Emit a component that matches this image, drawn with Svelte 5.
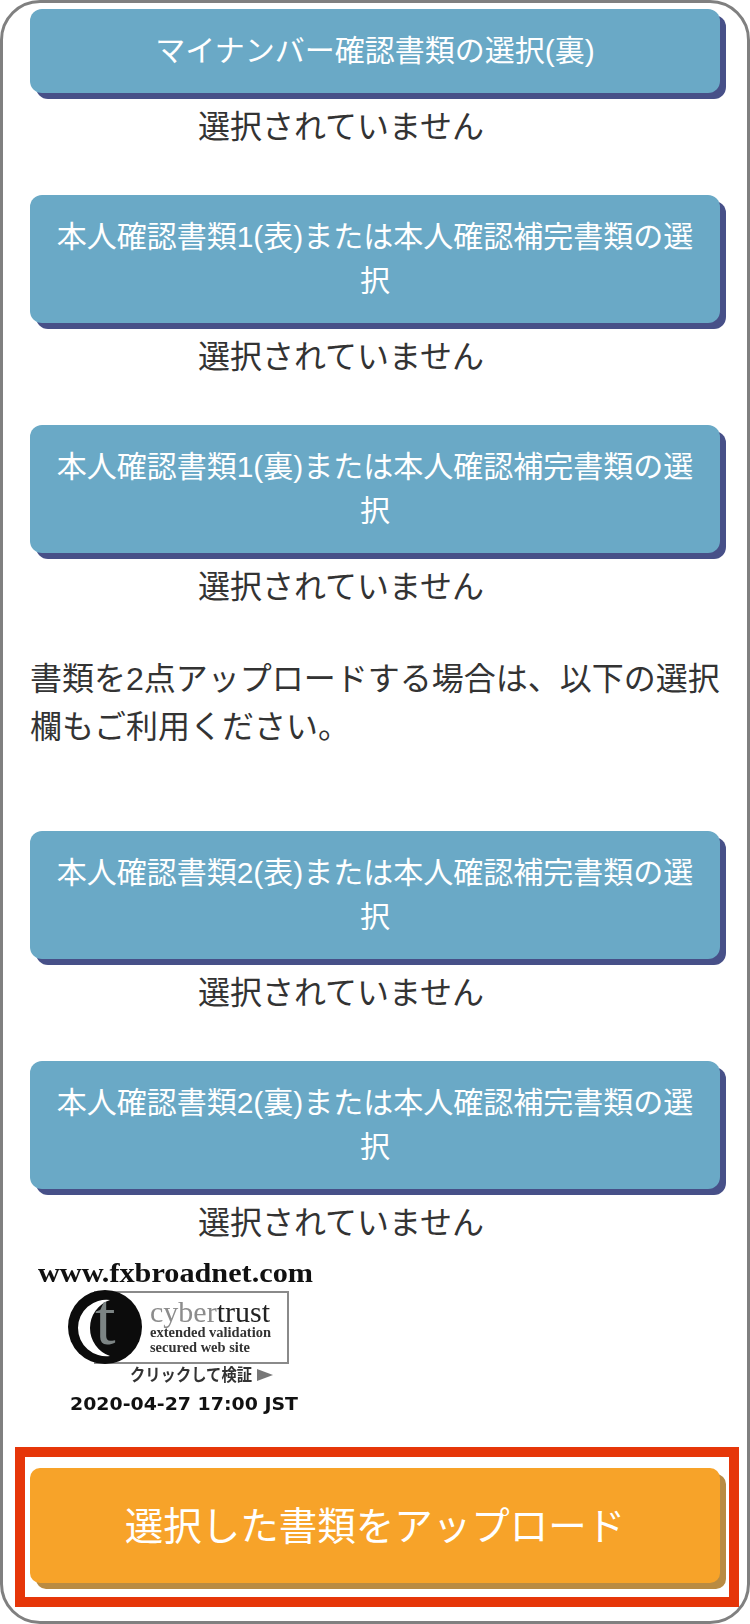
<script>
  const before = [
    { label: "マイナンバー確認書類の選択(裏)" },
    { label: "本人確認書類1(表)または本人確認補完書類の選択" },
    { label: "本人確認書類1(裏)または本人確認補完書類の選択" }
  ];
  const after = [
    { label: "本人確認書類2(表)または本人確認補完書類の選択" },
    { label: "本人確認書類2(裏)または本人確認補完書類の選択" }
  ];
</script>

<main class="frame">
  {#each before as doc}
    <div class="doc">
      <button class="pick">{doc.label}</button>
      <p class="status">選択されていません</p>
    </div>
  {/each}

  <p class="note">書類を2点アップロードする場合は、以下の選択欄もご利用ください。</p>

  {#each after as doc}
    <div class="doc">
      <button class="pick">{doc.label}</button>
      <p class="status">選択されていません</p>
    </div>
  {/each}

  <svg class="seal" width="320" height="170" viewBox="0 0 320 170" aria-label="cybertrust seal">
    <text x="8" y="23" class="domain" textLength="275" lengthAdjust="spacingAndGlyphs">www.fxbroadnet.com</text>
    <rect x="65" y="33" width="193" height="71" fill="#fff" stroke="#8a8a8a" stroke-width="2" />
    <circle cx="75" cy="68" r="37" fill="#0c0c0c" />
    <path d="M80 41 A28.250 28.250 0 1 0 80 97 A29.600 29.600 0 0 1 80 41 Z" fill="#fff" />
    <text x="65" y="85" class="t">t</text>
    <text x="120" y="63" class="brand" textLength="120" lengthAdjust="spacingAndGlyphs"><tspan fill="#8c8c8c">cyber</tspan><tspan fill="#222">trust</tspan></text>
    <text x="120" y="78" class="small" textLength="121" lengthAdjust="spacingAndGlyphs">extended validation</text>
    <text x="120" y="93" class="small" textLength="100" lengthAdjust="spacingAndGlyphs">secured web site</text>
    <text x="100" y="122" class="verify" textLength="122" lengthAdjust="spacingAndGlyphs">クリックして検証</text>
    <path d="M227 110 L243 116 L227 122 Z" fill="#777" />
    <text x="40" y="151" class="stamp" textLength="228" lengthAdjust="spacingAndGlyphs">2020-04-27 17:00 JST</text>
  </svg>

  <div class="submit-box">
    <button class="submit">選択した書類をアップロード</button>
  </div>
</main>

<style>
  :global(body) {
    margin: 0;
    background: #fff;
  }

  .frame {
    box-sizing: border-box;
    width: 750px;
    height: 1624px;
    padding: 6px 27px 0;
    border: 3px solid #808080;
    border-radius: 40px;
    color: #333;
    font-family: "Liberation Sans", "Noto Sans CJK JP", sans-serif;
    overflow: hidden;
  }

  .doc {
    margin-bottom: 44px;
  }

  .pick {
    display: block;
    box-sizing: border-box;
    width: 690px;
    padding: 20px 12px;
    border: 0;
    border-radius: 12px;
    background: #6aa9c6;
    box-shadow: 6px 6px 0 #475088;
    color: #fff;
    font: inherit;
    font-size: 30px;
    line-height: 44px;
    text-align: center;
  }

  .status {
    margin: 10px 0 0;
    padding-left: 168px;
    font-size: 32px;
    line-height: 48px;
  }

  .note {
    margin: 0 0 80px;
    font-size: 32px;
    line-height: 48px;
  }

  .seal {
    display: block;
    margin: -32px 0 0 0;
    filter: blur(0.7px);
  }

  .domain {
    font-family: "Liberation Serif", serif;
    font-size: 27px;
    font-weight: 700;
    fill: #111;
  }

  .t {
    font-family: "Liberation Serif", serif;
    font-size: 74px;
    fill: #7c8484;
  }

  .brand {
    font-family: "Liberation Serif", serif;
    font-size: 30px;
  }

  .small {
    font-family: "Liberation Serif", serif;
    font-size: 14px;
    font-weight: 700;
    fill: #333;
  }

  .verify {
    font-family: "Noto Sans CJK JP", sans-serif;
    font-size: 17px;
    font-weight: 700;
    fill: #333;
  }

  .stamp {
    font-family: "DejaVu Sans", sans-serif;
    font-size: 18px;
    font-weight: 700;
    fill: #111;
  }

  .submit-box {
    box-sizing: border-box;
    width: 724px;
    height: 160px;
    margin: 18px 0 0 -15px;
    padding: 11px 5px 0;
    border: 10px solid #e63609;
  }

  .submit {
    display: block;
    width: 690px;
    height: 115px;
    padding: 0 0 6px;
    border: 0;
    border-radius: 10px;
    background: #f7a329;
    box-shadow: 6px 6px 0 #b98b42;
    color: #fff;
    font: inherit;
    font-size: 38.500px;
    text-align: center;
  }
</style>
